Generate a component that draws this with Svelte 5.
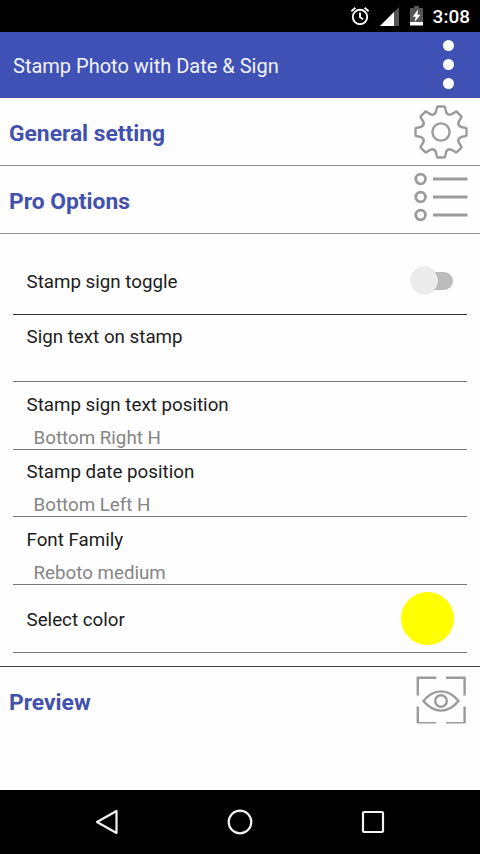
<script>
  let signEnabled = false;
  let stampColor = "#ffff00";

  const textRows = [
    { label: "Sign text on stamp", value: "" },
    { label: "Stamp sign text position", value: "Bottom Right H" },
    { label: "Stamp date position", value: "Bottom Left H" },
    { label: "Font Family", value: "Reboto medium" },
  ];

  function polar(r, deg) {
    const a = (deg * Math.PI) / 180;
    return `${(27 + r * Math.sin(a)).toFixed(2)} ${(27 - r * Math.cos(a)).toFixed(2)}`;
  }

  // one tooth every 45 degrees, with a shallow curve between teeth
  function gearPath() {
    let d = "";
    for (let a = 0; a < 360; a += 45) {
      d += `${a === 0 ? "M" : "L"}${polar(20.3, a - 15)} L${polar(24.2, a - 10)} Q${polar(26, a - 9)} ${polar(25.6, a - 6)}`;
      d += ` L${polar(25.6, a + 6)} Q${polar(26, a + 9)} ${polar(24.2, a + 10)} L${polar(20.3, a + 15)}`;
      d += ` Q${polar(17.8, a + 22.5)} ${polar(20.3, a + 30)} `;
    }
    return d + "Z";
  }
</script>

<div class="screen">
  <div class="status">
    <svg class="alarm" width="20" height="20" viewBox="0 0 20 20">
      <circle cx="10" cy="11" r="7.2" />
      <path d="M10 6.5v4.8l3.2 2M1.4 5.2l4-3.4M18.6 5.2l-4-3.4" />
    </svg>
    <svg class="signal" width="19" height="19" viewBox="0 0 19 19">
      <path fill="#555" d="M19 0v19H0z" />
      <path fill="#fff" d="M14 5v14H0z" />
    </svg>
    <svg class="battery" width="13" height="20" viewBox="0 0 13 20">
      <path fill="#555" d="M4 0h5v2h4v14H0V2h4z" />
      <path fill="#fff" d="M0 16h13v3.5H0zM8 3.5L2.7 10.7h3L4.6 16l6-7.2H7.5z" />
    </svg>
    <span class="clock">3:08</span>
  </div>

  <header class="appbar">
    <span>Stamp Photo with Date &amp; Sign</span>
    <button class="more" aria-label="More options"><i></i><i></i><i></i></button>
  </header>

  <section class="heading">
    <h2>General setting</h2>
    <svg width="54" height="54" viewBox="0 0 54 54">
      <path d={gearPath()} />
      <circle cx="27" cy="27" r="8.6" />
    </svg>
  </section>

  <section class="heading">
    <h2>Pro Options</h2>
    <svg class="list-icon" width="54" height="54" viewBox="0 0 54 54">
      {#each [9, 27, 45] as y}
        <circle cx="6.6" cy={y} r="4.8" />
        <path d="M19 {y}h34.5" />
      {/each}
    </svg>
  </section>

  <div class="options">
    <div class="row inline">
      <span class="label">Stamp sign toggle</span>
      <button class="switch" class:on={signEnabled} aria-label="Stamp sign toggle" on:click={() => (signEnabled = !signEnabled)}>
        <i class="thumb"></i>
      </button>
    </div>
    {#each textRows as row}
      <div class="row">
        <div class="label">{row.label}</div>
        <div class="value">{row.value}</div>
      </div>
    {/each}
    <div class="row inline">
      <span class="label">Select color</span>
      <span class="swatch" style="background:{stampColor}"></span>
    </div>
  </div>

  <section class="heading preview">
    <h2>Preview</h2>
    <svg width="54" height="54" viewBox="0 0 54 54">
      <path d="M3.8 21.5V3.8h18.5M32 3.8h18.6v17.700M3.8 32.5v16.500M50.600 32.500v16.500" />
      <path class="thin" d="M3 48.800h19.300M32 48.800h19.400" />
      <path d="M9.500 27C20 14.200 34 14.200 44.500 27C34 39.800 20 39.800 9.500 27z" />
      <circle cx="27" cy="27" r="5.800" />
    </svg>
  </section>

  <nav class="navbar">
    <svg width="26" height="28" viewBox="0 0 26 28"><path d="M3 14L22.500 3v22z" /></svg>
    <svg width="28" height="28" viewBox="0 0 28 28"><circle cx="14" cy="14" r="11.300" /></svg>
    <svg width="26" height="28" viewBox="0 0 26 28"><rect x="3" y="4" width="20" height="20" rx="1" /></svg>
  </nav>
</div>

<style>
  :global(body) {
    background: #fefefe;
  }
  .screen {
    display: flex;
    flex-direction: column;
    width: 480px;
    height: 854px;
    overflow: hidden;
    background: #fefefe;
    font-family: Roboto, "Liberation Sans", sans-serif;
    color: #1c1c1c;
  }
  button {
    padding: 0;
    border: 0;
    background: none;
  }
  svg {
    display: block;
    flex: none;
  }
  .status {
    display: flex;
    align-items: center;
    justify-content: flex-end;
    height: 32px;
    padding-right: 10px;
    background: #000;
    color: #fff;
  }
  .alarm {
    margin-right: 10px;
    fill: none;
    stroke: #fff;
    stroke-width: 1.9;
  }
  .signal {
    margin-right: 11px;
  }
  .battery {
    margin-right: 10px;
  }
  .clock {
    font-size: 19px;
    font-weight: 500;
  }
  .appbar {
    display: flex;
    align-items: center;
    justify-content: space-between;
    height: 66px;
    padding: 0 26px 0 13px;
    background: #3f51b5;
    color: #f1f3ff;
    font-size: 20px;
  }
  .appbar span {
    padding-top: 2px;
  }
  .more {
    display: flex;
    flex-direction: column;
    gap: 8px;
    margin-top: -2px;
  }
  .more i {
    width: 11px;
    height: 11px;
    border-radius: 50%;
    background: #fff;
  }
  .heading {
    display: flex;
    align-items: center;
    justify-content: space-between;
    box-sizing: border-box;
    height: 68px;
    padding: 0 12px 0 9px;
    border-bottom: 1px solid #8c8c8c;
  }
  .heading h2 {
    margin: 3px 0 0;
    font-size: 22.8px;
    font-weight: 700;
    color: #4250ae;
  }
  .heading svg {
    fill: none;
    stroke: #9b9b9b;
    stroke-width: 2.4;
  }
  .heading .list-icon {
    margin-top: -5px;
    stroke-width: 2.8;
  }
  .thin {
    stroke-width: 1.5;
  }
  .options {
    padding: 13px;
    border-bottom: 1px solid #444;
  }
  .row {
    box-sizing: border-box;
    height: 67.6px;
    padding: 10.5px 13.5px 0;
    border-bottom: 1px solid #777;
  }
  .row:first-child {
    border-color: #333;
  }
  .row.inline {
    display: flex;
    align-items: center;
    justify-content: space-between;
    padding-top: 1px;
  }
  .inline .label {
    padding-top: 2px;
  }
  .label {
    font-size: 18.75px;
    line-height: 24px;
  }
  .value {
    padding: 9px 0 0 7px;
    font-size: 18.75px;
    line-height: 24px;
    color: #858585;
  }
  .switch {
    display: flex;
    align-items: center;
    width: 34px;
    height: 18px;
    margin-right: 1px;
    border-radius: 9px;
    background: #bcbcbc;
  }
  .switch.on {
    justify-content: flex-end;
  }
  .thumb {
    flex: none;
    width: 27px;
    height: 27px;
    margin-left: -8px;
    border-radius: 50%;
    background: #ebebeb;
    box-shadow: 0 0 2px rgba(0, 0, 0, 0.15);
  }
  .swatch {
    width: 53px;
    height: 53px;
    border-radius: 50%;
  }
  .preview {
    border-bottom: 0;
  }
  .navbar {
    display: flex;
    align-items: center;
    justify-content: space-between;
    box-sizing: border-box;
    height: 64px;
    margin-top: auto;
    padding: 0 94px;
    background: #000;
  }
  .navbar svg {
    fill: none;
    stroke: #f2f2f2;
    stroke-width: 2.2;
    stroke-linejoin: round;
  }
</style>
